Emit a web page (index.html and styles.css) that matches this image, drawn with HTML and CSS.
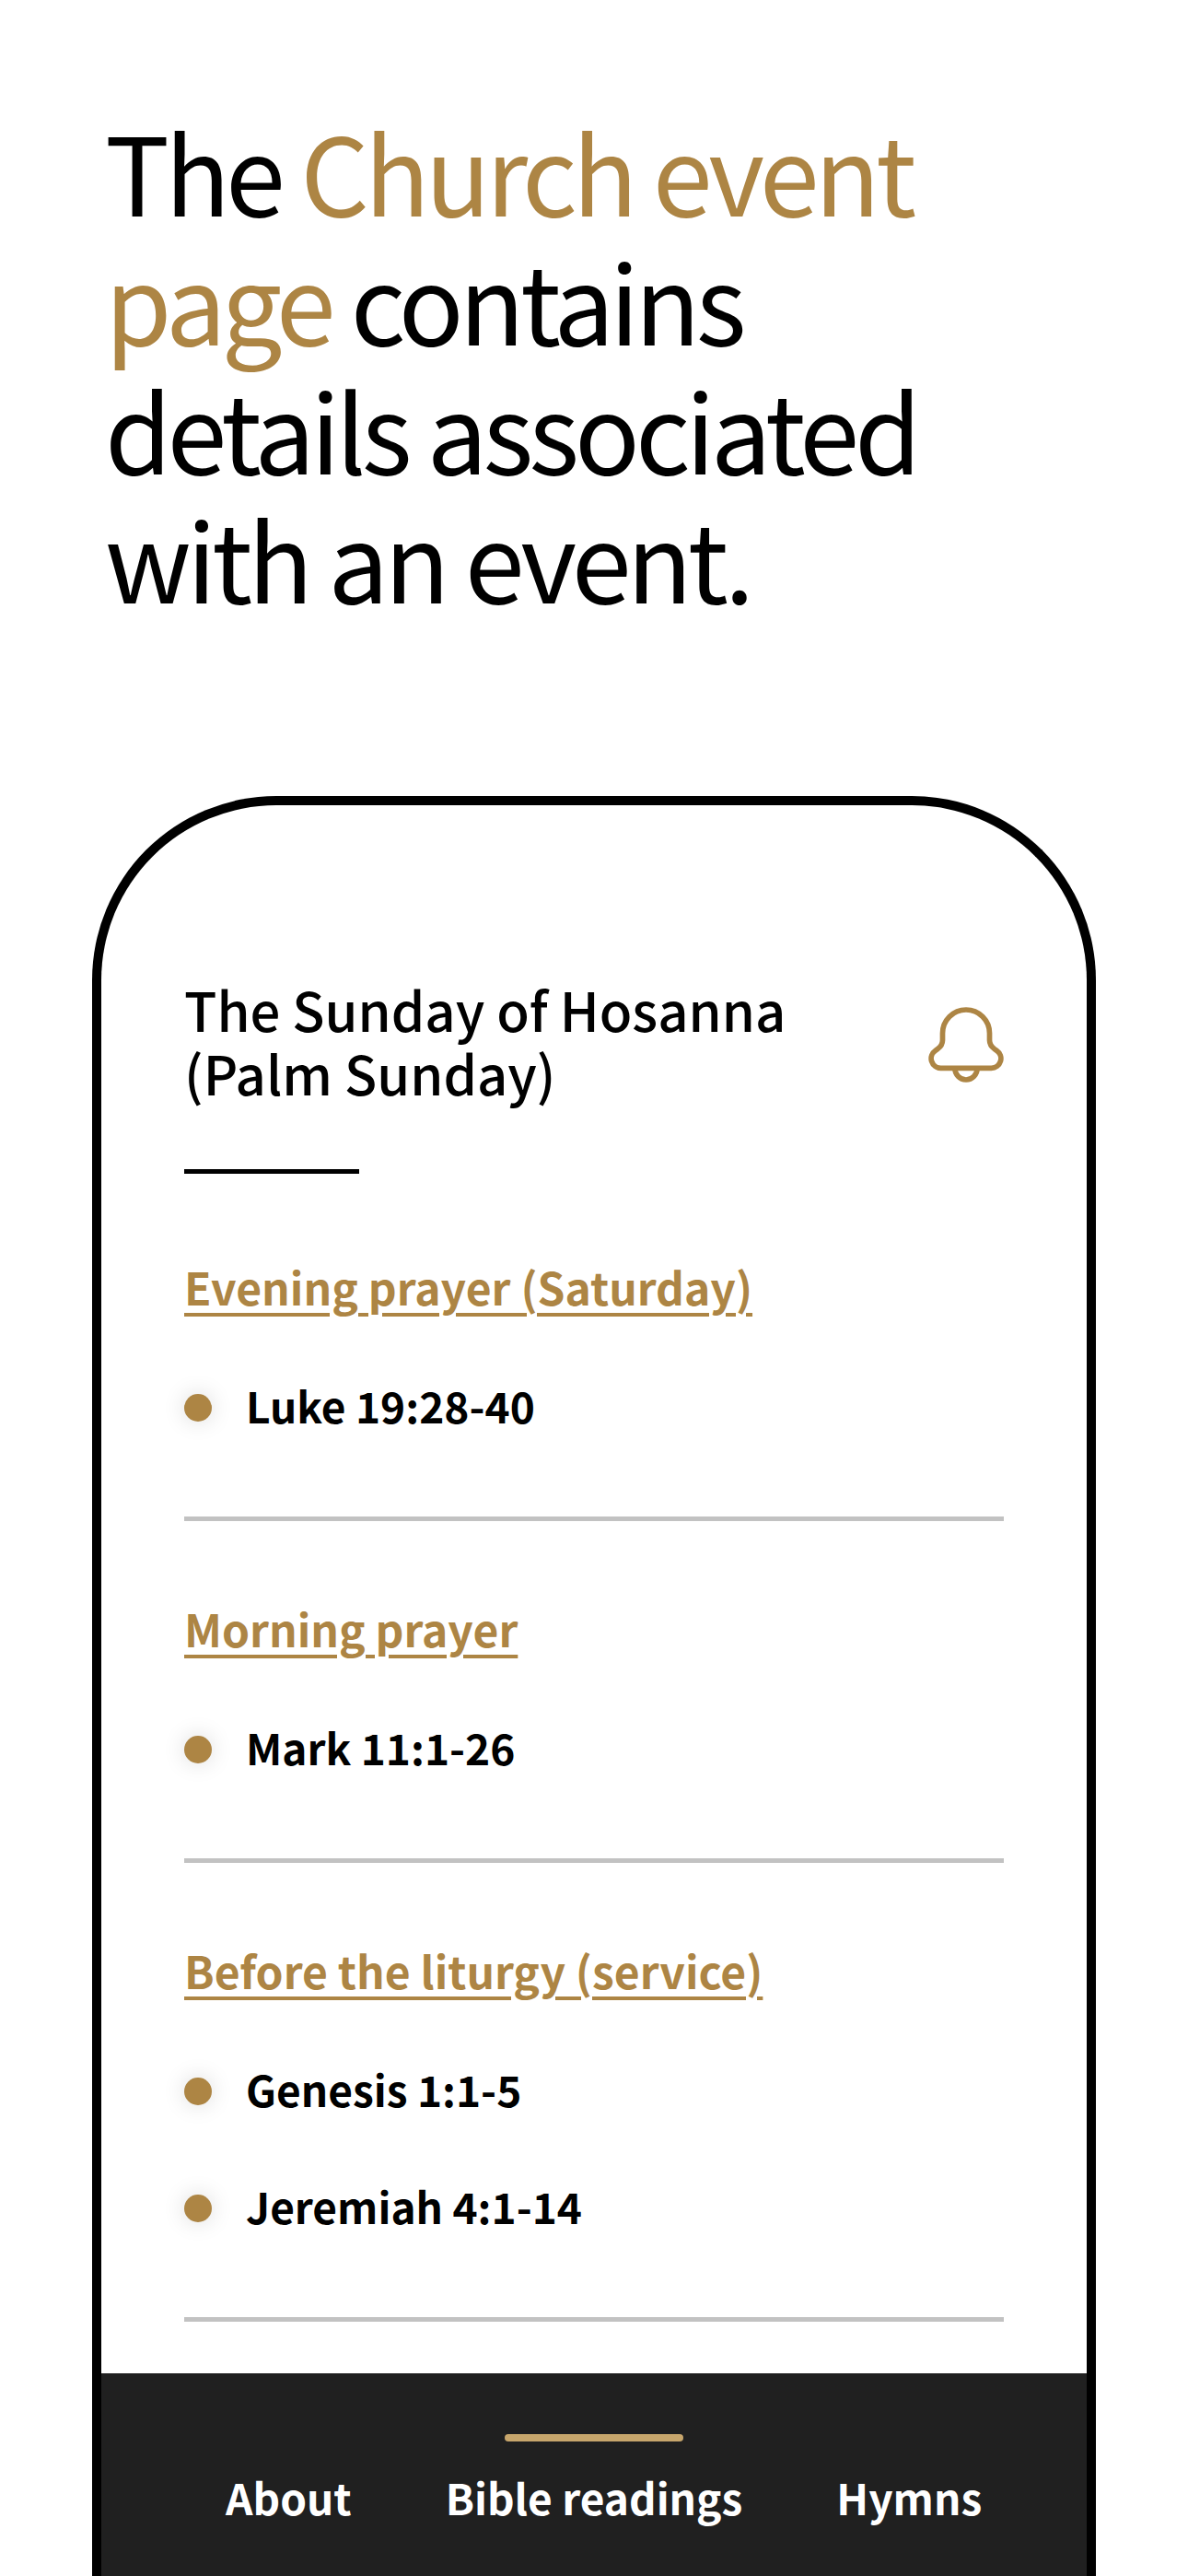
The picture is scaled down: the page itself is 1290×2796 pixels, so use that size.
FILE: index.html
```html
<!DOCTYPE html>
<html lang="en">
  <head>
    <meta charset="utf-8">
    <meta name="viewport" content="width=device-width, initial-scale=1">
    <title>Church events</title>
    <link rel="stylesheet" href="styles.css">
  </head>
  <body>
    <h1>The <em>Church event page</em> contains details associated with an event.</h1>
    <main class="phone">
      <div class="content">
        <header class="event">
          <h2>The Sunday of Hosanna<br>(Palm Sunday)</h2>
          <button class="bell" type="button" aria-label="Notify me">
            <svg viewBox="0 0 82 82" fill="none" stroke="currentColor" stroke-width="5.7">
              <path d="M15.5 28.5a25.5 25.5 0 0 1 51 0V36c0 4 2 7.200 5.500 9.700l2.300 1.600A10.400 10.400 0 0 1 68.500 66.300H13.500A10.400 10.400 0 0 1 7.700 47.300l2.300-1.600C13.500 43.200 15.500 40 15.500 36z"/>
              <path d="M28.800 66.300a12.200 12.700 0 0 0 24.400 0"/>
            </svg>
          </button>
        </header>
        <section class="reading">
          <h3><a href="#evening">Evening prayer (Saturday)</a></h3>
          <ul>
            <li>Luke 19:28-40</li>
          </ul>
        </section>
        <section class="reading">
          <h3><a href="#morning">Morning prayer</a></h3>
          <ul>
            <li>Mark 11:1-26</li>
          </ul>
        </section>
        <section class="reading">
          <h3><a href="#before">Before the liturgy (service)</a></h3>
          <ul>
            <li>Genesis 1:1-5</li>
            <li>Jeremiah 4:1-14</li>
          </ul>
        </section>
      </div>
      <nav class="tabs">
        <a href="#about">About</a>
        <a href="#readings" class="active">Bible readings</a>
        <a href="#hymns">Hymns</a>
      </nav>
    </main>
  </body>
</html>
```
FILE: styles.css
```css
* {
  box-sizing: border-box;
}
body {
  display: flex;
  flex-direction: column;
  min-height: 100vh;
  margin: 0;
  background-color: #fff;
  color: #000;
  font-family: "Noto Sans CJK SC", "Open Sans", sans-serif;
}
h1, h2, h3, ul {
  margin: 0;
  padding: 0;
}
h1 {
  max-width: 1100px;
  padding: 114px 80px 0 114px;
  font-size: 117px;
  font-weight: 400;
  line-height: 140px;
  letter-spacing: -5px;
}
h1 em {
  color: #ad8544;
  font-style: normal;
}
.phone {
  display: flex;
  flex: 1;
  flex-direction: column;
  margin: 190px 100px 0;
  border: 10px solid #000;
  border-bottom: none;
  border-radius: 200px 200px 0 0;
}
.content {
  flex: 1;
  padding: 187px 90px 56px;
}
.event {
  position: relative;
  display: flex;
  justify-content: space-between;
  align-items: center;
  margin-bottom: 6px;
  padding-bottom: 75px;
}
.event::after {
  position: absolute;
  bottom: 0;
  left: 0;
  width: 190px;
  height: 5px;
  background-color: #000;
  content: "";
}
.event h2 {
  font-size: 58px;
  font-weight: 500;
  line-height: 69px;
}
.bell {
  width: 82px;
  height: 82px;
  margin-top: 8px;
  padding: 0;
  border: none;
  background: none;
  color: #ad8544;
  cursor: pointer;
  & svg {
    display: block;
  }
}
.reading {
  padding: 78px 0 83px;
  border-bottom: 5px solid #c2c2c2;
}
.reading h3 {
  font-size: 48px;
  font-weight: 600;
  line-height: 76px;
}
.reading a {
  color: #ad8544;
  text-decoration-thickness: 4px;
  text-underline-offset: 8px;
}
.reading ul {
  display: flex;
  flex-direction: column;
  gap: 52px;
  padding-top: 54px;
  list-style: none;
}
.reading li {
  display: flex;
  align-items: center;
  gap: 37px;
  font-size: 46px;
  font-weight: 600;
  line-height: 75px;
}
.reading li::before {
  width: 30px;
  height: 30px;
  margin-top: 4px;
  border-radius: 50%;
  background-color: #ad8544;
  box-shadow: 0 0 24px rgba(0, 0, 0, 0.15);
  content: "";
}
.tabs {
  display: grid;
  grid-template-columns: 1fr auto 1fr;
  align-items: end;
  gap: 102px;
  padding: 66px 0 48px;
  background-color: #202020;
  & a {
    color: #fff;
    font-size: 46px;
    font-weight: 600;
    line-height: 76px;
    text-decoration: none;
  }
  & a:first-child {
    justify-self: end;
  }
  & a.active::before {
    display: block;
    width: 194px;
    height: 8px;
    margin: 0 auto 22px;
    border-radius: 4px;
    background-color: #c7a66c;
    content: "";
  }
}
```
